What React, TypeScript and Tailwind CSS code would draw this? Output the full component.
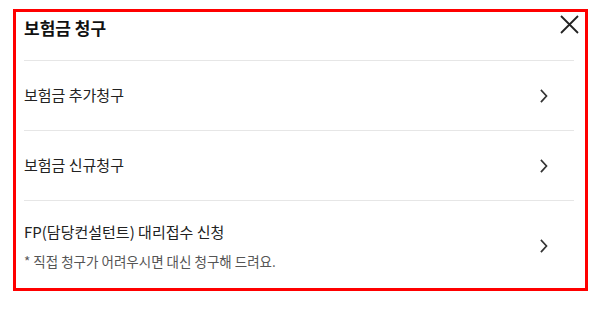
import React from 'react';

const font = { fontFamily: '"Noto Sans CJK KR", "Noto Sans", sans-serif' };

function Chevron() {
    return (
        <svg width="8" height="14" viewBox="0 0 8 14" fill="none" stroke="#333" strokeWidth="1.7" strokeLinecap="square">
            <path d="M1.5 1.5 L6.5 7 L1.5 12.5" />
        </svg>
    );
}

export default function App() {
    const rows = [
        { title: '보험금 추가청구' },
        { title: '보험금 신규청구' },
    ];

    return (
        <div className="w-[596px] h-[313px] bg-white overflow-hidden" style={font}>
            <div className="relative ml-[13px] mt-[9px] w-[575px] h-[282px] border-[3px] border-[#ff0000] bg-white">
                {/* header */}
                <div className="h-[48px] pl-[8px] pt-[4px]">
                    <h2 className="text-[17px] leading-[24px] font-bold text-[#111]">보험금 청구</h2>
                </div>
                <button className="absolute right-[6px] top-[3px] w-[19px] h-[19px]">
                    <svg width="19" height="19" viewBox="0 0 19 19" fill="none" stroke="#222" strokeWidth="1.8">
                        <path d="M1 1 L18 18 M18 1 L1 18" />
                    </svg>
                </button>

                {/* menu list */}
                <div className="ml-[8px] mr-[11px]">
                    {rows.map((r, i) => (
                        <div key={i} className="flex items-center justify-between h-[70px] border-t border-[#e6e6e6] pr-[26px]">
                            <span className="text-[15px] leading-[20px] text-[#222] -mt-[1px]">{r.title}</span>
                            <Chevron />
                        </div>
                    ))}
                    <div className="flex items-center justify-between border-t border-[#e6e6e6] pt-[21px] pr-[26px]">
                        <div>
                            <div className="text-[15px] leading-[20px] text-[#222]">FP(담당컨설턴트) 대리접수 신청</div>
                            <div className="mt-[10px] text-[13.5px] leading-[18px] text-[#555]">* 직접 청구가 어려우시면 대신 청구해 드려요.</div>
                        </div>
                        <Chevron />
                    </div>
                </div>
            </div>
        </div>
    );
}
